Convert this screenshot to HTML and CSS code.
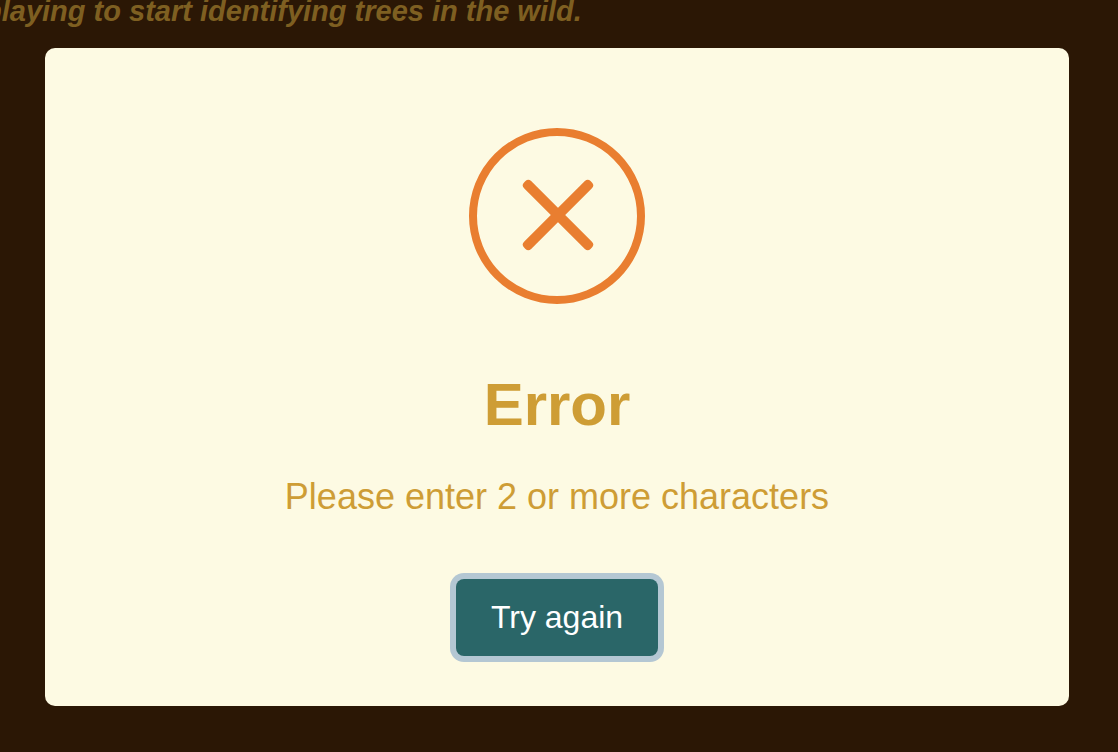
FILE: index.html
```html
<!DOCTYPE html>
<html lang="en">
<head>
<meta charset="utf-8">
<title>Error</title>
<link rel="stylesheet" href="styles.css">
</head>
<body>
<p class="intro">playing to start identifying trees in the wild.</p>
<main class="dialog" role="alertdialog" aria-labelledby="title" aria-describedby="message">
<svg class="icon" viewBox="0 0 176 176" aria-hidden="true">
<circle cx="88" cy="88" r="84" fill="none" stroke="#e97e30" stroke-width="8"/>
<g fill="#e97e30">
<rect x="42" y="82" width="94" height="10" rx="4" transform="rotate(45 89 87)"/>
<rect x="42" y="82" width="94" height="10" rx="4" transform="rotate(-45 89 87)"/>
</g>
</svg>
<h1 class="title" id="title">Error</h1>
<p class="message" id="message">Please enter 2 or more characters</p>
<button class="confirm" type="button">Try again</button>
</main>
</body>
</html>
```

FILE: styles.css
```css
* {
  box-sizing: border-box;
}

body {
  margin: 0;
  min-height: 100vh;
  overflow: hidden;
  background: #2b1705;
  color: #ce9d35;
  font-family: "Liberation Sans", Arial, sans-serif;
}

.intro {
  margin: -6px 0 20px -16px;
  color: #7e5f21;
  font-size: 29px;
  font-style: italic;
  font-weight: 700;
  line-height: 34px;
  white-space: nowrap;
}

.dialog {
  display: flex;
  flex-direction: column;
  align-items: center;
  margin: 0 49px 0 45px;
  padding: 80px 32px 50px;
  border-radius: 10px;
  background: #fdfae3;
}

.icon {
  width: 176px;
  height: 176px;
}

.title {
  margin: 66px 0 0;
  font-size: 60px;
  line-height: 70px;
}

.message {
  margin: 36px 0 0;
  font-size: 36px;
  line-height: 42px;
}

.confirm {
  margin: 61px 0 0;
  padding: 20px 35px;
  border: 0;
  border-radius: 8px;
  background: #2a6668;
  box-shadow: 0 0 0 6px #b4c7d3;
  color: #fff;
  font: 32px/37px "Liberation Sans", Arial, sans-serif;
}
```
